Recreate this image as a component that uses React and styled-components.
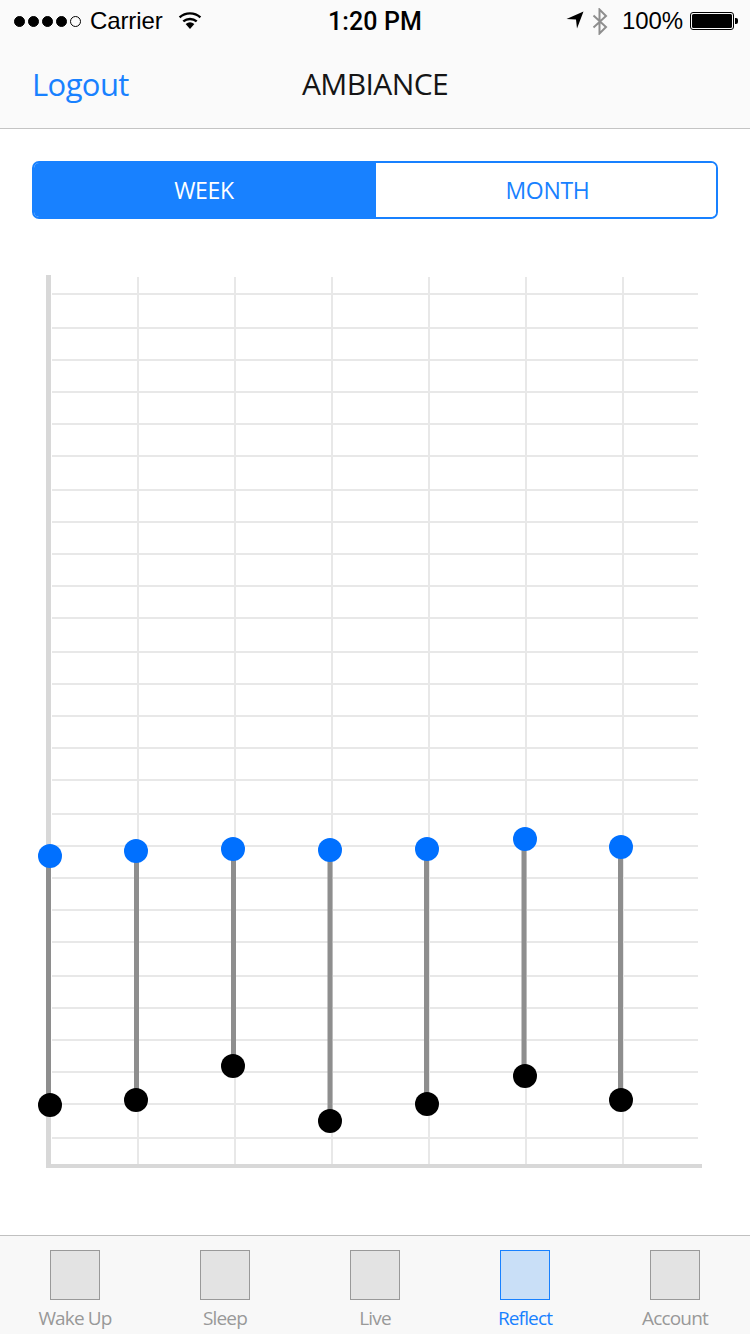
import React from 'react';
import styled, { createGlobalStyle } from 'styled-components';

const Global = createGlobalStyle`
  html, body { margin: 0; padding: 0; background: #fff; }
  * { box-sizing: border-box; }
`;
const BLUE = '#1881ff';
const uiFont = '"Open Sans", "Liberation Sans", sans-serif';
const sysFont = '"Liberation Sans", Arimo, sans-serif';

const Page = styled.div`
  width: 750px; height: 1334px; display: flex; flex-direction: column; overflow: hidden; background: #fff;
`;
const Header = styled.header`
  height: 129px; background: #fafafa; border-bottom: 1px solid #c4c4c4; flex: none;
`;
const StatusBar = styled.div`
  height: 41px; padding: 1px 12px 0 14px; display: grid; grid-template-columns: 1fr auto 1fr; align-items: center;
  font-family: ${sysFont}; color: #000; font-size: 24px; letter-spacing: -0.1px;
`;
const StatusLeft = styled.div`display: flex; align-items: center;`;
const Signal = styled.div`display: flex; gap: 3px; margin-right: 9px;`;
const Dot = styled.span`
  width: 11px; height: 11px; border-radius: 50%;
  background: ${p => (p.$off ? 'transparent' : '#000')};
  border: 1px solid #000;
`;
const Wifi = styled.svg`margin: -3px 0 0 15px; display: block;`;
const Time = styled.div`font-family: Roboto, ${sysFont}; font-weight: 500; font-size: 25px; letter-spacing: 0.1px; padding: 1px 2px 0 0;`;
const StatusRight = styled.div`display: flex; align-items: center; justify-content: flex-end;`;
const Percent = styled.span`margin: 0 7px 0 14px; font-size: 24px;`;
const NavBar = styled.nav`
  height: 87px; padding: 0 32px 2px; display: grid; grid-template-columns: 1fr auto 1fr; align-items: center;
  font-family: ${uiFont};
`;
const Logout = styled.a`font-size: 31px; color: ${BLUE}; letter-spacing: -0.6px;`;
const Title = styled.h1`margin: 0; font-size: 30px; font-weight: 400; color: #151515; letter-spacing: -0.6px;`;

const Segments = styled.div`
  margin: 32px 32px 0; height: 58px; display: grid; grid-template-columns: 342px 1fr; flex: none;
  border: 2px solid ${BLUE}; border-radius: 7px; overflow: hidden;
`;
const Segment = styled.div`
  display: flex; align-items: center; justify-content: center;
  font-family: ${uiFont}; font-size: 23px; letter-spacing: -0.3px;
  padding: ${p => (p.$active ? '0 2px 0 0' : '0 0 0 3px')};
  background: ${p => (p.$active ? BLUE : '#fff')};
  color: ${p => (p.$active ? '#fff' : BLUE)};
`;
const ChartBox = styled.main`flex: 1; min-height: 0; margin-top: 16px;`;
const ChartSvg = styled.svg`display: block;`;

const TabBar = styled.footer`
  flex: none; height: 99px; background: #f8f8f8; border-top: 1px solid #c0c0c0;
  display: grid; grid-template-columns: repeat(5, 150px); padding-top: 14px;
`;
const Tab = styled.div`display: flex; flex-direction: column; align-items: center;`;
const TabIcon = styled.div`
  width: 50px; height: 50px;
  border: 1px solid ${p => (p.$active ? BLUE : '#999')};
  background: ${p => (p.$active ? '#c9dff7' : '#e3e3e3')};
`;
const TabLabel = styled.span`
  margin-top: 5px; font-family: ${uiFont}; font-size: 19px; line-height: 26px; letter-spacing: -0.85px;
  color: ${p => (p.$active ? BLUE : '#999')};
`;

const hLines = [294,328,360,392,424,456,490,522,554,586,618,652,684,716,748,780,814,846,878,910,942,976,1008,1040,1072,1104,1138];
const vLines = [138,235,332,429,526,623];
const data = [
  { stem: 48.5, x: 50, top: 856, bottom: 1105 },
  { stem: 136.5, x: 136, top: 851, bottom: 1100 },
  { stem: 233.5, x: 233, top: 849, bottom: 1066 },
  { stem: 330, x: 330, top: 850, bottom: 1121 },
  { stem: 426.5, x: 427, top: 849, bottom: 1104 },
  { stem: 524, x: 525, top: 839, bottom: 1076 },
  { stem: 620.5, x: 621, top: 847, bottom: 1100 },
];
const tabs = ['Wake Up', 'Sleep', 'Live', 'Reflect', 'Account'];

export default function App() {
  return (
    <Page>
      <Global />
      <Header>
        <StatusBar>
          <StatusLeft>
            <Signal>{[0,1,2,3,4].map(i => <Dot key={i} $off={i === 4} />)}</Signal>
            <span>Carrier</span>
            <Wifi width="24" height="18" viewBox="0 0 24 18">
              <path d="M12 18 L7.6 13 A7 7 0 0 1 16.4 13 Z" fill="#000" />
              <path d="M5.3 10.4 A10.4 10.4 0 0 1 18.7 10.4" fill="none" stroke="#000" strokeWidth="2.4" />
              <path d="M1.6 6.3 A15.6 15.6 0 0 1 22.4 6.3" fill="none" stroke="#000" strokeWidth="2.4" />
            </Wifi>
          </StatusLeft>
          <Time>1:20 PM</Time>
          <StatusRight>
            <svg width="18" height="18" viewBox="0 0 18 18" style={{ display: 'block', marginTop: -2 }}>
              <path d="M0.5 8 L17.5 0.5 L11 17.5 L10 8.5 Z" fill="#000" />
            </svg>
            <svg width="16" height="27" viewBox="0 0 16 27" style={{ display: 'block', marginLeft: 8 }}>
              <path d="M1.5 7.5 L14 19 L7.5 25.5 V1.5 L14 8 L1.5 19.5" fill="none" stroke="#8e8e8e" strokeWidth="2" />
            </svg>
            <Percent>100%</Percent>
            <svg width="48" height="20" viewBox="0 0 48 20" style={{ display: 'block' }}>
              <rect x="0.5" y="1.5" width="43" height="17" rx="2.5" fill="none" stroke="#000" strokeWidth="1" />
              <rect x="2" y="3" width="40" height="14" rx="1.5" fill="#000" />
              <path d="M45 7 H46 A2 2 0 0 1 48 9 V11 A2 2 0 0 1 46 13 H45 Z" fill="#000" />
            </svg>
          </StatusRight>
        </StatusBar>
        <NavBar>
          <div><Logout>Logout</Logout></div>
          <Title>AMBIANCE</Title>
          <div />
        </NavBar>
      </Header>
      <Segments>
        <Segment $active>WEEK</Segment>
        <Segment>MONTH</Segment>
      </Segments>
      <ChartBox>
        <ChartSvg width="750" height="1000" viewBox="0 235 750 1000">
          {hLines.map(y => <line key={y} x1="52" x2="698" y1={y} y2={y} stroke="#e8e8e8" strokeWidth="2" />)}
          {vLines.map(x => <line key={x} x1={x} x2={x} y1="277" y2="1166" stroke="#e8e8e8" strokeWidth="2" />)}
          <line x1="48.5" x2="48.5" y1="275" y2="1168" stroke="#d8d8d8" strokeWidth="5" />
          <line x1="46" x2="702" y1="1166" y2="1166" stroke="#d8d8d8" strokeWidth="4" />
          {data.map(d => (
            <g key={d.x}>
              <line x1={d.stem} x2={d.stem} y1={d.top} y2={d.bottom} stroke="#8e8e8e" strokeWidth="5" />
              <circle cx={d.x} cy={d.top} r="12" fill="#0070ff" />
              <circle cx={d.x} cy={d.bottom} r="12" fill="#000" />
            </g>
          ))}
        </ChartSvg>
      </ChartBox>
      <TabBar>
        {tabs.map(t => (
          <Tab key={t}>
            <TabIcon $active={t === 'Reflect'} />
            <TabLabel $active={t === 'Reflect'}>{t}</TabLabel>
          </Tab>
        ))}
      </TabBar>
    </Page>
  );
}
